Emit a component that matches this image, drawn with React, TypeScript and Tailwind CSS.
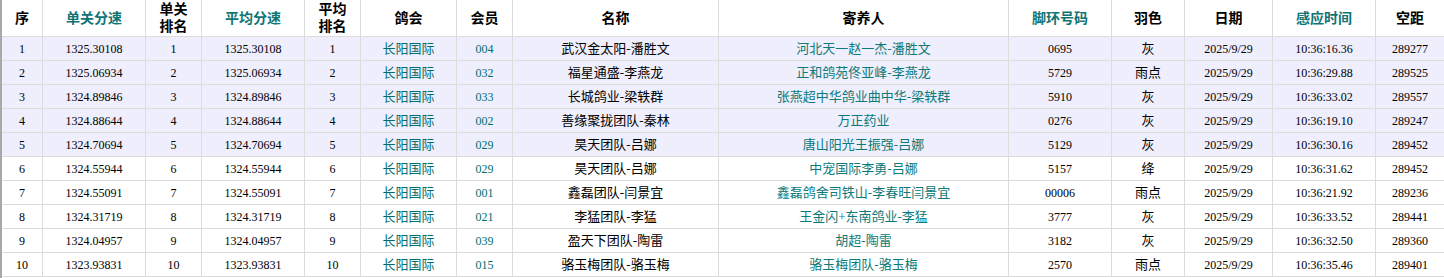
import React from "react";

type Row = {
  no: number;
  speed: string;
  rank: number;
  avg: string;
  avgRank: number;
  club: string;
  member: string;
  name: string;
  owner: string;
  ring: string;
  color: string;
  date: string;
  time: string;
  dist: string;
};

const rows: Row[] = [
  { no: 1, speed: "1325.30108", rank: 1, avg: "1325.30108", avgRank: 1, club: "长阳国际", member: "004", name: "武汉金太阳-潘胜文", owner: "河北天一赵一杰-潘胜文", ring: "0695", color: "灰", date: "2025/9/29", time: "10:36:16.36", dist: "289277" },
  { no: 2, speed: "1325.06934", rank: 2, avg: "1325.06934", avgRank: 2, club: "长阳国际", member: "032", name: "福星通盛-李燕龙", owner: "正和鸽苑佟亚峰-李燕龙", ring: "5729", color: "雨点", date: "2025/9/29", time: "10:36:29.88", dist: "289525" },
  { no: 3, speed: "1324.89846", rank: 3, avg: "1324.89846", avgRank: 3, club: "长阳国际", member: "033", name: "长城鸽业-梁轶群", owner: "张燕超中华鸽业曲中华-梁轶群", ring: "5910", color: "灰", date: "2025/9/29", time: "10:36:33.02", dist: "289557" },
  { no: 4, speed: "1324.88644", rank: 4, avg: "1324.88644", avgRank: 4, club: "长阳国际", member: "002", name: "善缘聚拢团队-秦林", owner: "万正药业", ring: "0276", color: "灰", date: "2025/9/29", time: "10:36:19.10", dist: "289247" },
  { no: 5, speed: "1324.70694", rank: 5, avg: "1324.70694", avgRank: 5, club: "长阳国际", member: "029", name: "昊天团队-吕娜", owner: "唐山阳光王振强-吕娜", ring: "5129", color: "灰", date: "2025/9/29", time: "10:36:30.16", dist: "289452" },
  { no: 6, speed: "1324.55944", rank: 6, avg: "1324.55944", avgRank: 6, club: "长阳国际", member: "029", name: "昊天团队-吕娜", owner: "中宠国际李勇-吕娜", ring: "5157", color: "绛", date: "2025/9/29", time: "10:36:31.62", dist: "289452" },
  { no: 7, speed: "1324.55091", rank: 7, avg: "1324.55091", avgRank: 7, club: "长阳国际", member: "001", name: "鑫磊团队-闫景宜", owner: "鑫磊鸽舍司铁山-李春旺闫景宜", ring: "00006", color: "雨点", date: "2025/9/29", time: "10:36:21.92", dist: "289236" },
  { no: 8, speed: "1324.31719", rank: 8, avg: "1324.31719", avgRank: 8, club: "长阳国际", member: "021", name: "李猛团队-李猛", owner: "王金闪+东南鸽业-李猛", ring: "3777", color: "灰", date: "2025/9/29", time: "10:36:33.52", dist: "289441" },
  { no: 9, speed: "1324.04957", rank: 9, avg: "1324.04957", avgRank: 9, club: "长阳国际", member: "039", name: "盈天下团队-陶雷", owner: "胡超-陶雷", ring: "3182", color: "灰", date: "2025/9/29", time: "10:36:32.50", dist: "289360" },
  { no: 10, speed: "1323.93831", rank: 10, avg: "1323.93831", avgRank: 10, club: "长阳国际", member: "015", name: "骆玉梅团队-骆玉梅", owner: "骆玉梅团队-骆玉梅", ring: "2570", color: "雨点", date: "2025/9/29", time: "10:36:35.46", dist: "289401" },
];

const grid =
  "grid grid-cols-[41px_103px_56px_103px_56px_96px_56px_206px_290px_103px_73px_88px_103px_1fr]";

const head = "flex items-center justify-center border-r border-b border-[#dcdcdc] h-[37px] text-[14px] font-bold leading-[17px] text-center";
const cell = "flex items-center justify-center border-r border-b border-[#dcdcdc] h-[24px] whitespace-nowrap";
const num = "text-[12px]";
const cjk = "text-[13px]";

export default function App() {
  return (
    <div
      className="w-[1444px] h-[278px] bg-white border-l-2 border-[#a8a8a8] text-black"
      style={{ fontFamily: '"Liberation Serif", "Noto Sans CJK SC", serif' }}
    >
      <div className={grid}>
        <div className={head}>序</div>
        <div className={`${head} text-[#0f7474]`}>单关分速</div>
        <div className={head}>单关<br />排名</div>
        <div className={`${head} text-[#0f7474]`}>平均分速</div>
        <div className={head}>平均<br />排名</div>
        <div className={head}>鸽会</div>
        <div className={head}>会员</div>
        <div className={head}>名称</div>
        <div className={head}>寄养人</div>
        <div className={`${head} text-[#0f7474]`}>脚环号码</div>
        <div className={head}>羽色</div>
        <div className={head}>日期</div>
        <div className={`${head} text-[#0f7474]`}>感应时间</div>
        <div className={`${head} border-r-0`}>空距</div>

        {rows.map((r) => {
          const bg = r.no <= 5 ? "bg-[#eeeefc]" : "bg-white";
          return (
            <React.Fragment key={r.no}>
              <div className={`${cell} ${bg} ${num}`}>{r.no}</div>
              <div className={`${cell} ${bg} ${num}`}>{r.speed}</div>
              <div className={`${cell} ${bg} ${num}`}>{r.rank}</div>
              <div className={`${cell} ${bg} ${num}`}>{r.avg}</div>
              <div className={`${cell} ${bg} ${num}`}>{r.avgRank}</div>
              <div className={`${cell} ${bg} ${cjk} text-[#006e6e]`}>{r.club}</div>
              <div className={`${cell} ${bg} ${num} text-[#006e6e]`}>{r.member}</div>
              <div className={`${cell} ${bg} ${cjk}`}>{r.name}</div>
              <div className={`${cell} ${bg} ${cjk} text-[#0a7a7a]`}>{r.owner}</div>
              <div className={`${cell} ${bg} ${num}`}>{r.ring}</div>
              <div className={`${cell} ${bg} ${cjk}`}>{r.color}</div>
              <div className={`${cell} ${bg} ${num}`}>{r.date}</div>
              <div className={`${cell} ${bg} ${num}`}>{r.time}</div>
              <div className={`${cell} ${bg} ${num} border-r-0`}>{r.dist}</div>
            </React.Fragment>
          );
        })}
      </div>
    </div>
  );
}
